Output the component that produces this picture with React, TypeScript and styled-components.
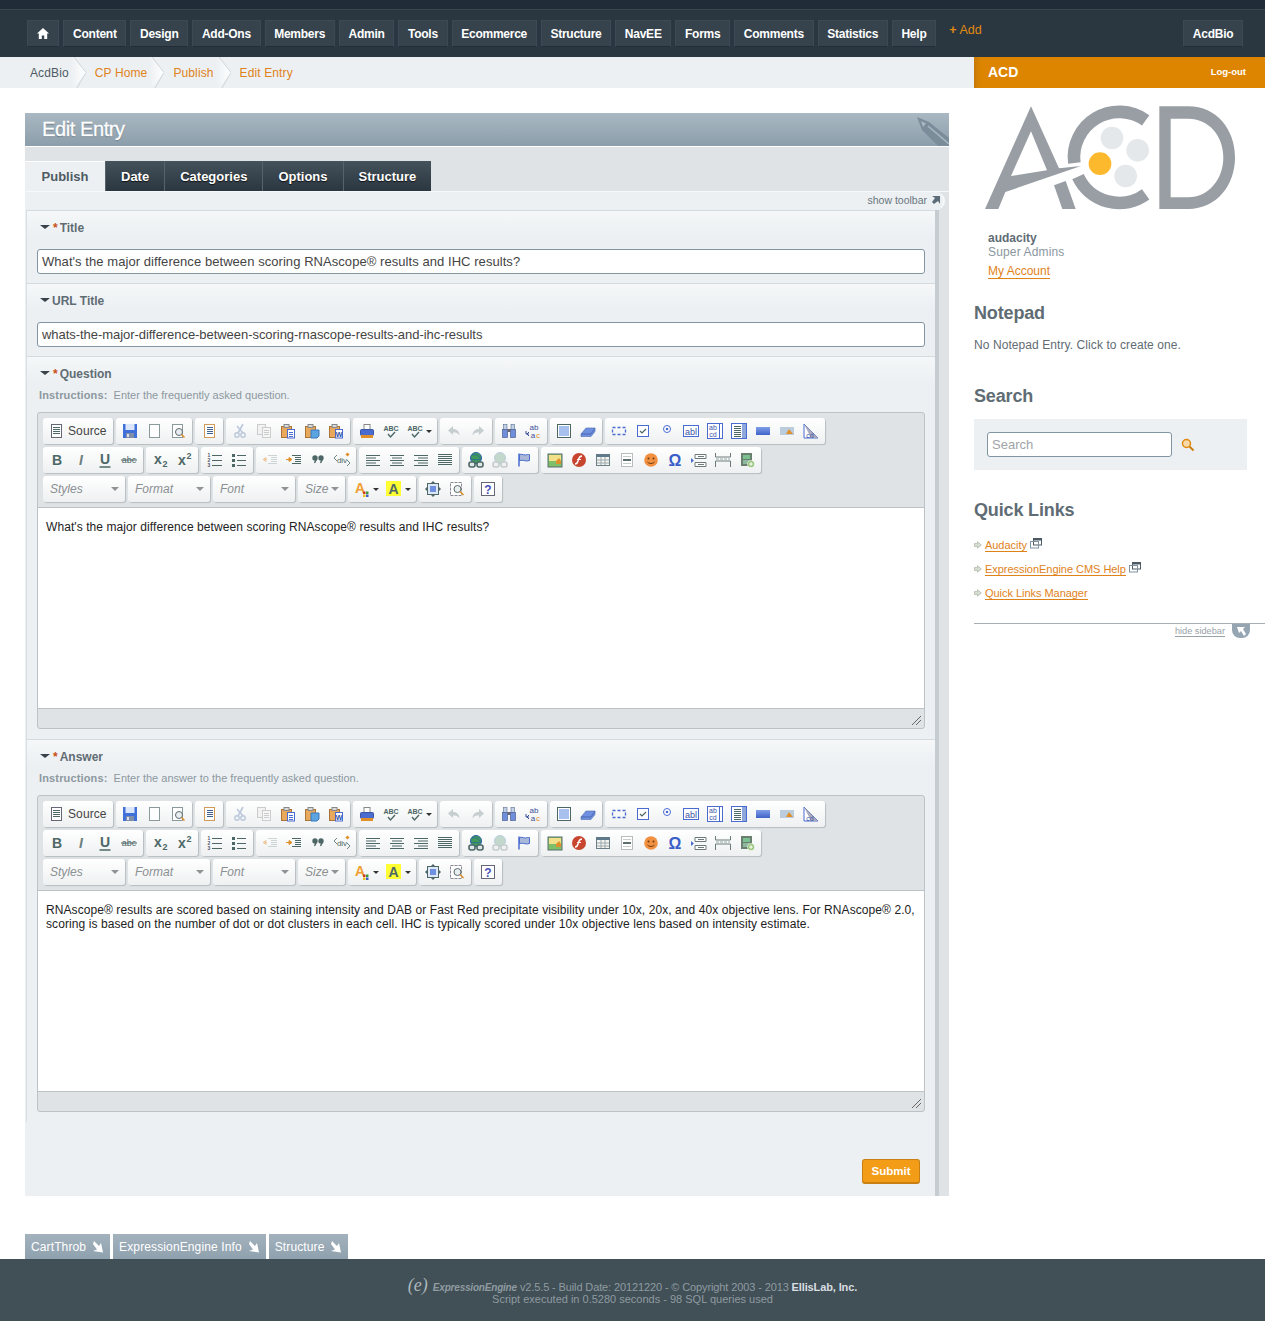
import React from 'react';
import styled, { createGlobalStyle } from 'styled-components';

const GlobalStyle = createGlobalStyle`
  html, body {
    margin: 0;
    padding: 0;
    background: #fff;
    font-family: "Liberation Sans", Arial, sans-serif;
    font-size: 12px;
    color: #5f6c74;
  }
  * { box-sizing: border-box; }
`;

const Header = styled.header`
  height: 57px;
  background: #2a3640;
  border-top: 9px solid #202d38;
  box-shadow: inset 0 1px 0 #384650;
  padding: 0 22px 0 27px;
`;

const NavWrap = styled.div`
  display: flex;
  justify-content: space-between;
  padding-top: 11px;
  height: 48px;
`;

const NavList = styled.nav`
  display: flex;
  gap: 4px;
  align-items: flex-start;
`;

const NavButton = styled.a`
  height: 27px;
  padding: 0 8.7px;
  display: flex;
  align-items: center;
  background: #36434d;
  border: 1px solid #3d4a55;
  border-bottom-color: #222e37;
  color: #fff;
  font-size: 12px;
  font-weight: bold;
  letter-spacing: -0.25px;
  white-space: nowrap;
`;

const HomeIcon = styled.svg`
  display: block;
  margin: 0 0.5px;
`;

const AddLink = styled.a`
  color: #e08a12;
  font-size: 12.5px;
  margin: 3px 0 0 9px;
  line-height: 14px;
  white-space: nowrap;
`;

const AddPlus = styled.b`
  margin-right: 3px;
`;

const SubRow = styled.div`
  display: flex;
  height: 31px;
`;

const Breadcrumbs = styled.div`
  flex: 1;
  background: #ecf0f3;
  display: flex;
  align-items: center;
  padding-left: 30px;
`;

const Crumb = styled.a<{ $plain?: boolean }>`
  color: ${p => (p.$plain ? '#4f5b63' : '#e0821a')};
  font-size: 12px;
  letter-spacing: 0.12px;
`;

const ChevronSvg = styled.svg`
  width: 15px;
  height: 31px;
  margin: 0 9px 0 2px;
  display: block;
`;

const SideHead = styled.div`
  width: 291px;
  background: linear-gradient(to right, #c77a08 0, #dd8500 7px);
  color: #fff;
  font-weight: bold;
  display: flex;
  align-items: center;
  justify-content: space-between;
  padding: 0 19px 2px 14px;
`;

const SideTitle = styled.span`
  font-size: 14px;
`;

const LogOut = styled.a`
  font-size: 9.5px;
  color: #fff;
`;

const Body = styled.div`
  display: grid;
  grid-template-columns: 974px 291px;
`;

const Main = styled.main`
  padding: 25px 25px 0;
`;

const Heading = styled.div`
  height: 34px;
  background: linear-gradient(#a9b8c2, #8c9eab);
  border-bottom: 1px solid #fff;
  position: relative;
  overflow: hidden;
  padding-left: 17px;
  color: #fff;
  font-size: 20px;
  line-height: 32px;
  letter-spacing: -0.4px;
  -webkit-text-stroke: 0.3px #fff;
  text-shadow: 0 1px 1px rgba(60, 75, 85, 0.6);
`;

const PencilSvg = styled.svg`
  position: absolute;
  right: 0;
  top: 4px;
  width: 33px;
  height: 30px;
`;

const Panel = styled.div`
  background: #dfe3e5;
  padding-top: 14px;
`;

const Tabs = styled.div`
  display: flex;
  height: 31px;
  border-bottom: 1px solid #f6f8f9;
`;

const Tab = styled.a<{ $active?: boolean }>`
  height: 30px;
  display: flex;
  align-items: center;
  justify-content: center;
  font-size: 13px;
  font-weight: bold;
  white-space: nowrap;
  ${p =>
    p.$active
      ? `width: 80px;
         background: #ecf0f3;
         border-top: 1px solid #fff;
         color: #4f5b63;`
      : `padding: 0 15px;
         background: linear-gradient(#44525c, #2a3640);
         border-left: 1px solid #55636d;
         color: #fff;
         text-shadow: 0 1px 1px #111;`}
`;

const ToolbarToggle = styled.div`
  width: 920px;
  height: 18px;
  background: #ecf0f3;
  border-radius: 0 10px 10px 0;
  border-right: 2px solid #f7f9fa;
  display: flex;
  align-items: center;
  justify-content: flex-end;
  padding: 0 3px 2px 0;
  gap: 5px;
  font-size: 10.5px;
  color: #6a767e;
`;

const PinSvg = styled.svg`
  width: 8px;
  height: 8px;
`;

const PublishBody = styled.div`
  width: 914px;
  background: #ecf0f3;
  border-right: 4px solid #c5ccd2;
  padding-left: 1px;
`;

const Field = styled.section`
  background: linear-gradient(#f5f7f8, #ecf0f3 26px);
  border-top: 1px solid #d3dae0;
  border-left: 1px solid #d8dfe6;
  padding: 10px 10px 9px 10px;
`;

const LabelRow = styled.div`
  display: flex;
  align-items: center;
  height: 14px;
  font-weight: bold;
  font-size: 12px;
  color: #5f6c74;
`;

const Caret = styled.span`
  width: 0;
  height: 0;
  margin: -3px 2px 0 3px;
  border-style: solid;
  border-width: 4px 5px 0;
  border-color: #39434a transparent transparent;
`;

const Required = styled.span`
  color: #c9501a;
  margin: 0 2px 0 1px;
`;

const Instructions = styled.p`
  margin: 7px 0 10px 2px;
  font-size: 11px;
  line-height: 14px;
  color: #8c989f;
`;

const InstructionsKey = styled.b`
  margin-right: 6px;
  letter-spacing: 0.15px;
`;

const TextInput = styled.div`
  height: 25px;
  margin-top: 14px;
  padding: 0 4px;
  background: #fff;
  border: 1px solid #8195a3;
  border-radius: 3px;
  font-size: 13px;
  letter-spacing: 0.06px;
  line-height: 23px;
  color: #444;
  white-space: nowrap;
`;

const UrlInput = styled(TextInput)`
  letter-spacing: -0.05px;
`;

const Editor = styled.div`
  border: 1px solid #bcc3c6;
  border-radius: 3px;
  background: #dfe3e5;
  margin-bottom: 1px;
`;

const Toolbar = styled.div`
  display: flex;
  flex-direction: column;
  gap: 3px;
  padding: 5px 5px;
  height: 95px;
  border-bottom: 1px solid #bcc3c6;
`;

const ToolRow = styled.div`
  display: flex;
  gap: 3px;
`;

const ToolGroup = styled.div`
  display: flex;
  height: 26px;
  padding: 0 2px;
  align-items: center;
  background: linear-gradient(#fff, #eef0f1);
  border-radius: 3px;
  box-shadow: 1px 1px 1px rgba(90, 100, 110, 0.3);
`;

const ToolButton = styled.span<{ $wide?: boolean }>`
  width: ${p => (p.$wide ? '32px' : '24px')};
  height: 26px;
  display: flex;
  align-items: center;
  padding-left: 4px;
  gap: 3px;
`;

const ToolCaret = styled.i`
  width: 0;
  height: 0;
  border-style: solid;
  border-width: 3px 3px 0;
  border-color: #333 transparent transparent;
`;

const SourceButton = styled.span`
  width: 66px;
  display: flex;
  align-items: center;
  gap: 3px;
  padding-left: 4px;
  font-size: 12px;
  letter-spacing: 0.1px;
  color: #444;
`;

const Combo = styled.span<{ $w: number }>`
  width: ${p => p.$w}px;
  height: 26px;
  margin: 0 -2px;
  padding: 0 6px 0 7px;
  display: flex;
  align-items: center;
  justify-content: space-between;
  font-size: 12px;
  font-style: italic;
  color: #8a8f92;
`;

const ComboCaret = styled.i`
  width: 0;
  height: 0;
  border-style: solid;
  border-width: 4px 4px 0;
  border-color: #8f9396 transparent transparent;
`;

const EditArea = styled.div`
  height: 201px;
  background: #fff;
  padding: 12px 4px 11px 8px;
  font-size: 12px;
  letter-spacing: 0.08px;
  line-height: 14px;
  color: #222;
  border-bottom: 1px solid #bcc3c6;
`;

const Resize = styled.div`
  height: 19px;
  display: flex;
  justify-content: flex-end;
  align-items: flex-end;
  padding: 0 3px 3px 0;
`;

const SubmitRow = styled.div`
  display: flex;
  justify-content: flex-end;
  padding: 37px 15px 12px 0;
`;

const Submit = styled.button`
  height: 25px;
  width: 58px;
  padding: 0;
  background: #f39c17;
  border: 1px solid #c97f11;
  border-bottom-width: 2px;
  border-radius: 3px;
  color: #fff;
  font: bold 11.5px "Liberation Sans", Arial, sans-serif;
`;

const Sidebar = styled.aside`
  padding-top: 10px;
`;

const LogoSvg = styled.svg`
  width: 270px;
  height: 120px;
  margin-left: 1px;
  display: block;
`;

const UserBlock = styled.div`
  padding: 13px 0 0 14px;
  font-size: 12px;
  line-height: 14px;
`;

const UserName = styled.div`
  font-weight: bold;
`;

const UserGroup = styled.div`
  color: #8a97a0;
  letter-spacing: 0.15px;
`;

const Link = styled.a`
  color: #e0821a;
  border-bottom: 1px solid #e0821a;
`;

const AccountLine = styled.div`
  margin-top: 5px;
`;

const SideTitle2 = styled.h3`
  margin: 0;
  font-size: 18px;
  line-height: 22px;
  font-weight: bold;
  letter-spacing: -0.15px;
  color: #5f6c74;
`;

const SideSection = styled.section<{ $top: number }>`
  margin-top: ${p => p.$top}px;
`;

const NoteText = styled.p`
  margin: 14px 0 0;
  font-size: 12px;
  letter-spacing: 0.08px;
  line-height: 14px;
`;

const SearchBox = styled.div`
  width: 273px;
  height: 51px;
  margin-top: 12px;
  background: #ecf0f3;
  display: flex;
  align-items: center;
  padding-left: 13px;
  gap: 9px;
`;

const SearchInput = styled.div`
  width: 185px;
  height: 25px;
  padding: 0 4px;
  background: #fff;
  border: 1px solid #8195a3;
  border-radius: 3px;
  font-size: 13px;
  line-height: 23px;
  color: #a0a4a8;
`;

const QuickList = styled.ul`
  list-style: none;
  margin: 17px 0 0;
  padding: 0;
  display: flex;
  flex-direction: column;
  gap: 10px;
`;

const QuickItem = styled.li`
  display: flex;
  align-items: center;
  height: 14px;
  font-size: 11px;
  letter-spacing: -0.04px;
`;

const SmallSvg = styled.svg`
  display: block;
  flex: none;
`;

const ArrowWrap = styled.span`
  width: 11px;
  display: flex;
`;

const PopWrap = styled.span`
  margin: -4px 0 0 3px;
  display: flex;
`;

const HideRow = styled.div`
  margin-top: 23px;
  border-top: 1px solid #a8afb4;
  display: flex;
  justify-content: flex-end;
  padding-right: 15px;
  gap: 7px;
`;

const HideLink = styled.a`
  font-size: 9.2px;
  line-height: 10px;
  margin-top: 2px;
  height: 11px;
  color: #98a2a9;
  border-bottom: 1px solid #98a2a9;
`;

const HideTab = styled.span`
  width: 18px;
  height: 14px;
  background: #95a6b2;
  border-radius: 0 0 8px 8px;
  display: flex;
  align-items: center;
  justify-content: center;
`;

const AddonTabs = styled.div`
  display: flex;
  gap: 3px;
  margin: 38px 0 0 25px;
`;

const AddonTab = styled.a`
  height: 25px;
  padding: 0 6px;
  display: flex;
  align-items: center;
  gap: 7px;
  background: linear-gradient(#a3b2bd, #8fa1ae);
  color: #fff;
  font-size: 12px;
  letter-spacing: 0.12px;
  white-space: nowrap;
`;

const Footer = styled.footer`
  height: 62px;
  background: #414f56;
  padding-top: 23px;
  text-align: center;
  color: #8f9ba1;
  font-size: 11px;
  line-height: 11.5px;
`;

const FooterLine = styled.span`
  letter-spacing: -0.12px;
`;

const FooterE = styled.span`
  font: italic 18px/0 "Liberation Serif", serif;
  color: #aeb8bd;
  margin-right: 5px;
`;

const FooterBrand = styled.b`
  font-style: italic;
  font-size: 10px;
  letter-spacing: -0.2px;
  margin-right: 3px;
`;

const FooterMaker = styled.b`
  color: #d8dee1;
`;

const BLUE = '#4a6bd0';
const TEAL = '#4d6767';
const OFF = '#bcc8dc';
const ORANGE = '#e0902a';

const Lines = ({ x, y, w, n, gap = 2, c = TEAL }: { x: number; y: number; w: number; n: number; gap?: number; c?: string }) => (
  <path d={Array.from({ length: n }, (_, i) => `M${x} ${y + i * gap + 0.5}h${w}`).join('')} stroke={c} fill="none" />
);

const Letter = ({ t, x = 8, y = 13, size = 14, c = TEAL, italic, weight = 'bold' }: { t: string; x?: number; y?: number; size?: number; c?: string; italic?: boolean; weight?: string }) => (
  <text x={x} y={y} textAnchor="middle" fontFamily="Liberation Sans" fontSize={size} fontWeight={weight} fontStyle={italic ? 'italic' : 'normal'} fill={c}>{t}</text>
);

const Board = () => (
  <>
    <rect x="1.5" y="3.5" width="10" height="11" fill="#e9a95c" stroke="#a9743a" />
    <rect x="4" y="1.5" width="5" height="3" fill="#d8d8d8" stroke="#888" />
  </>
);

const glyphs: Record<string, React.ReactNode> = {
  source: (<><rect x="2.5" y="1.5" width="10" height="13" fill="#fff" stroke="#667" /><Lines x={4} y={4} w={7} n={4} /></>),
  save: (<><rect x="1" y="1" width="14" height="14" fill="#3f6fd8" /><rect x="3.5" y="1" width="9" height="6" fill="#dbe6fb" /><rect x="4" y="10" width="8" height="5" fill="#7f8fa8" /><rect x="5" y="11" width="2" height="3" fill="#dde" /></>),
  newpage: (<rect x="3.5" y="1.5" width="10" height="13" fill="#fff" stroke="#8a9a9a" />),
  preview: (<><rect x="2.5" y="1.5" width="10" height="13" fill="#fff" stroke="#8a9a9a" /><circle cx="9" cy="9" r="3.5" fill="#e8eef2" stroke="#5d6b6b" /><path d="M11.5 11.5l3 3" stroke={ORANGE} strokeWidth="1.6" /></>),
  templates: (<><rect x="3.5" y="1.5" width="10" height="13" fill="#fff" stroke="#d49a58" /><Lines x={6} y={4} w={6} n={4} c="#3f5f8f" /></>),
  cut: (<><path d="M11 1L6 10M5 3l6 7" stroke={OFF} strokeWidth="1.6" /><circle cx="5" cy="12" r="2.2" fill="none" stroke={OFF} strokeWidth="1.4" /><circle cx="11" cy="12" r="2.2" fill="none" stroke={OFF} strokeWidth="1.4" /></>),
  copy: (<><rect x="1.5" y="1.5" width="8" height="10" fill="#f2f2f2" stroke="#ccc" /><rect x="6.5" y="4.5" width="8" height="10" fill="#f6f6f6" stroke="#ccc" /><Lines x={8} y={7} w={5} n={3} c="#ccc" /></>),
  paste: (<><Board /><rect x="7.5" y="6.5" width="7" height="8.5" fill="#fff" stroke={BLUE} /><Lines x={9} y={9} w={4} n={3} c={BLUE} /></>),
  pastetext: (<><Board /><path d="M7 7h8v6l-2 2H7z" fill="#5ba4e0" stroke="#3a78c0" /></>),
  pasteword: (<><Board /><rect x="7.5" y="6.5" width="7" height="8.5" fill="#fff" stroke={BLUE} /><Letter t="W" x={11} y={14} size={7} c="#2a4fa8" /></>),
  print: (<><rect x="5" y="1.5" width="6" height="5" fill="#fff" stroke="#888" /><rect x="1.5" y="6.5" width="13" height="6" rx="1" fill={BLUE} stroke="#3a55a8" /><rect x="2" y="12" width="12" height="3" fill={ORANGE} /></>),
  spell: (<><Letter t="ABC" y={8} size={7} /><path d="M5 11l2.5 3L12 9" stroke={TEAL} strokeWidth="1.4" fill="none" /></>),
  undo: (<path d="M7 3L2 7.5 7 12V9.5c3 0 5 .5 6.5 3 0-4-2.5-6.500-6.500-6.500z" fill="#c6ced0" />),
  redo: (<path d="M9 3l5 4.500L9 12V9.500c-3 0-5 .5-6.500 3 0-4 2.500-6.500 6.500-6.500z" fill="#c6ced0" />),
  find: (<><rect x="2.500" y="1.500" width="3.500" height="5" fill="#c3d0ea" stroke="#6a7f99" strokeWidth=".7" /><rect x="10" y="1.500" width="3.500" height="5" fill="#c3d0ea" stroke="#6a7f99" strokeWidth=".7" /><rect x="1.500" y="6.500" width="5" height="8" fill="#6f8fdc" stroke="#4a6090" strokeWidth=".7" /><rect x="9.500" y="6.500" width="5" height="8" fill="#6f8fdc" stroke="#4a6090" strokeWidth=".7" /><rect x="6.500" y="6" width="3" height="3" fill="#667" /></>),
  replace: (<><Letter t="ab" x={9} y={7} size={8} weight="normal" c="#3a4f9a" /><path d="M1 8v3h3M4 9l-2 2 2 2" stroke="#3a4f9a" fill="none" /><Letter t="a" x={8} y={15} size={8} weight="normal" c="#3a4f9a" /><Letter t="c" x={13} y={15} size={8} weight="normal" c={ORANGE} /></>),
  selectall: (<><rect x="1.500" y="1.500" width="13" height="13" fill="#fff" stroke={TEAL} /><rect x="3" y="3" width="10" height="10" fill="#a8c0ee" /></>),
  eraser: (<path d="M1 11l5-6h9l-4 6z M1 11v2.500h10l4-5V5l-4 6z" fill="#6f90e0" stroke="#4a6bb0" strokeWidth=".6" />),
  form: (<rect x="1.500" y="4.500" width="13" height="7" fill="none" stroke={BLUE} strokeWidth="1.300" strokeDasharray="3 2" />),
  checkbox: (<><rect x="2.500" y="2.500" width="11" height="11" fill="#fff" stroke={BLUE} /><path d="M5 8l2 2 4-4" stroke={TEAL} strokeWidth="1.200" fill="none" /></>),
  radio: (<><circle cx="8" cy="6" r="3.500" fill="#fff" stroke={BLUE} /><circle cx="8" cy="6" r="1.300" fill={BLUE} /></>),
  textfield: (<><rect x="0.500" y="2.500" width="15" height="11" fill="#fff" stroke={BLUE} /><Letter t="abl" x={8} y={12} size={9} c="#3a55a8" weight="normal" /></>),
  textarea: (<><rect x="0.500" y="0.500" width="15" height="15" fill="#fff" stroke={BLUE} /><Letter t="ab" x={6} y={7} size={7} c="#3a55a8" weight="normal" /><Letter t="cd" x={6} y={14} size={7} c="#3a55a8" weight="normal" /><path d="M12.500 1v14" stroke={BLUE} /></>),
  select: (<><rect x="0.500" y="0.500" width="15" height="15" fill="#fff" stroke={BLUE} /><Lines x={3} y={3} w={7} n={6} c={TEAL} /><rect x="11" y="1" width="4" height="14" fill="#8fa8dc" /></>),
  button: (<rect x="1" y="4" width="14" height="8" fill="url(#tb-blue)" />),
  imagebutton: (<><rect x="1" y="4" width="14" height="8" fill="#bcd" /><path d="M7 11l3-5 4 5z" fill={ORANGE} /></>),
  hidden: (<><path d="M1 1l14 14H1z" fill="#fff" stroke={BLUE} /><path d="M1 1l14 14H8z" fill="#aab" /><Letter t="cd" x={7} y={15} size={7} c="#3a55a8" weight="normal" /></>),
  bold: <Letter t="B" size={14} />,
  italic: <Letter t="I" size={14} italic c="#6d8080" />,
  underline: (<><Letter t="U" size={14} y={12} /><path d="M2.500 15h11" stroke={TEAL} strokeWidth="1.500" /></>),
  strike: (<><Letter t="abc" size={9} y={11} weight="normal" /><path d="M0 8h16" stroke={TEAL} /></>),
  sub: (<><Letter t="x" size={14} x={6} y={12} /><Letter t="2" size={9} x={13} y={15} /></>),
  sup: (<><Letter t="x" size={14} x={6} y={13} /><Letter t="2" size={9} x={13} y={7} /></>),
  numbered: (<><Letter t="1" size={5} x={2} y={5} c="#556" /><Letter t="2" size={5} x={2} y={10} c="#556" /><Letter t="3" size={5} x={2} y={15} c="#556" /><path d="M5 3.500h10M5 8.500h10M5 13.500h10" stroke={TEAL} /></>),
  bulleted: (<><rect x="1" y="2" width="3" height="3" fill={TEAL} /><rect x="1" y="7" width="3" height="3" fill={TEAL} /><rect x="1" y="12" width="3" height="3" fill={TEAL} /><path d="M6 3.500h9M6 8.500h9M6 13.500h9" stroke={TEAL} /></>),
  outdent: (<><path d="M6 3.500h9M9 5.500h6M9 7.500h6M9 9.500h6M6 11.500h9" stroke="#ccd4d4" /><path d="M1 7.500h4M1 7.500l3-2v4z" stroke="#f0c9a0" fill="#f0c9a0" /></>),
  indent: (<><path d="M6 3.500h9M9 5.500h6M9 7.500h6M9 9.500h6M6 11.500h9" stroke={TEAL} /><path d="M0 7.500h4M6 7.500l-3-2v4z" stroke={ORANGE} fill={ORANGE} /></>),
  quote: (<><circle cx="5" cy="6" r="2.700" fill={TEAL} /><circle cx="11" cy="6" r="2.700" fill={TEAL} /><path d="M6.500 7l-2 4M12.500 7l-2 4" stroke={TEAL} strokeWidth="1.500" /></>),
  div: (<><Letter t="div" size={8} y={11} x={8} weight="normal" /><path d="M3 3L0 6l3 3M13 8l3 3-3 3" stroke={TEAL} fill="none" strokeWidth=".8" /><rect x="12" y="1" width="3" height="3" fill={ORANGE} transform="rotate(45 13.500 2.500)" /></>),
  left: <path d="M1 3.500h14M1 6h10M1 8.500h14M1 11h10M1 13.500h14" stroke={TEAL} />,
  center: <path d="M1 3.500h14M3 6h10M1 8.500h14M3 11h10M1 13.500h14" stroke={TEAL} />,
  right: <path d="M1 3.500h14M5 6h10M1 8.500h14M5 11h10M1 13.500h14" stroke={TEAL} />,
  justify: <Lines x={1} y={2} w={14} n={6} gap={2} />,
  link: (<><circle cx="8" cy="6" r="5.500" fill="#3f9a5a" stroke="#2a5fa8" /><path d="M4 3c3-1 6 0 8 3M3 7c3 1 7 1 10 0" stroke="#2a5fa8" fill="none" strokeWidth=".8" /><rect x="1" y="10" width="6" height="5" rx="2" fill="#dfe6e6" stroke={TEAL} strokeWidth="1.600" /><rect x="9" y="10" width="6" height="5" rx="2" fill="#dfe6e6" stroke={TEAL} strokeWidth="1.600" /></>),
  unlink: (<><circle cx="8" cy="6" r="5.500" fill="#c3d8cc" stroke="#bcd" /><rect x="1" y="10" width="6" height="5" rx="2" fill="#f0f0f0" stroke="#c3cccc" strokeWidth="1.600" /><rect x="9" y="10" width="6" height="5" rx="2" fill="#f0f0f0" stroke="#c3cccc" strokeWidth="1.600" /></>),
  anchor: (<><path d="M3 1.500v13" stroke={BLUE} strokeWidth="1.500" /><path d="M3.500 2.500c3-1 5 1.500 8 0 2 0 2 0 2 0v6c-3 1.500-6-1-10 0z" fill="#a9b8d8" stroke={BLUE} /></>),
  image: (<><rect x="1" y="2" width="14" height="13" fill="#7fbf6a" stroke="#5a6f6f" /><rect x="2" y="3" width="12" height="6" fill="#f2e08a" /><path d="M9 9l3-3 2 3v3H9z" fill={ORANGE} /></>),
  flash: (<><circle cx="8" cy="8" r="7" fill="#c8452f" /><path d="M11 4c-3 0-3 2-4 5-.5 2-1 3-3 3" stroke="#fff" strokeWidth="1.400" fill="none" /><path d="M6 7.500h4" stroke="#fff" /></>),
  table: (<><rect x="1.500" y="2.500" width="13" height="11" fill="#f4f4f0" stroke="#6a7f88" /><rect x="1" y="2" width="14" height="3" fill="#5f7a88" /><path d="M6 5v8M10 5v8M2 8h12M2 11h12" stroke="#9aa8ac" /></>),
  hr: (<><rect x="2.500" y="1.500" width="11" height="13" fill="#fff" stroke="#b8bcbc" /><path d="M4 4.500h8M4 11.500h8" stroke="#c8cccc" /><rect x="4" y="7" width="8" height="2" fill="#5f6f6f" /></>),
  smiley: (<><circle cx="8" cy="8" r="6.800" fill="#f09040" /><circle cx="5.500" cy="6.500" r="1" fill="#6b3a10" /><circle cx="10.500" cy="6.500" r="1" fill="#6b3a10" /><path d="M4.500 10c2 2 5 2 7 0" stroke="#6b3a10" fill="none" /></>),
  omega: <Letter t="Ω" size={16} y={14} c="#3a5fc8" />,
  pagebreak: (<><path d="M4 2.500h11v4H4zM4 10.500h11v4H4z" fill="#fff" stroke="#6d7a7a" /><path d="M0 6l3 2.500L0 11z" fill={BLUE} /><path d="M7 4.500h6M7 12.500h6" stroke="#6d7a7a" /></>),
  iframe: (<><path d="M.5 1v4h15V1M.5 15v-6h15v6" fill="none" stroke="#6d7a7a" /><path d="M1 7h14" stroke="#9aa" strokeDasharray="3 1" /></>),
  video: (<><rect x="2" y="1" width="11" height="13" fill="#6a7f70" /><rect x="4" y="3" width="7" height="4" fill="#7ac090" /><rect x="4" y="8" width="7" height="4" fill="#8fb8a0" /><circle cx="12" cy="12" r="3.500" fill="#8fc070" stroke="#fff" strokeWidth=".6" /><path d="M10 12h4M12 10v4" stroke="#fff" /></>),
  textcolor: (<><Letter t="A" size={14} x={6} y={12} c="#f0a030" /><rect x="9" y="10.500" width="2.500" height="2.500" fill="#d03a2a" /><rect x="12" y="10.500" width="2.500" height="2.500" fill="#3a9a3a" /><rect x="9" y="13.500" width="2.500" height="2.500" fill="#f0c020" /><rect x="12" y="13.500" width="2.500" height="2.500" fill="#3a5fc8" /></>),
  bgcolor: (<><rect x="0" y="0" width="15" height="15" fill="#ffff33" /><Letter t="A" size={14} x={7.500} y={13} /></>),
  maximize: (<><path d="M8 0l2 2H6zM8 16l-2-2h4zM0 8l2-2v4zM16 8l-2 2V6z" fill={TEAL} /><rect x="2.500" y="2.500" width="11" height="11" fill="#dfe8f6" stroke={TEAL} /><rect x="5" y="5" width="6" height="6" fill="#6f90e0" /></>),
  blocks: (<><rect x="1.500" y="1.500" width="11" height="13" fill="#fff" stroke="#889" strokeDasharray="3 1" /><circle cx="8.500" cy="8" r="3.500" fill="#e8eef2" stroke="#5d6b6b" /><path d="M11 10.500l3.500 3.500" stroke={ORANGE} strokeWidth="1.600" /></>),
  about: (<><rect x="1.500" y="1.500" width="13" height="13" fill="#fff" stroke="#667" /><Letter t="?" size={12} y={12.500} c="#4a4fb8" /></>),
};

const Icon = ({ name }: { name: string }) => (
  <SmallSvg width="16" height="16" viewBox="0 0 16 16">{glyphs[name]}</SmallSvg>
);

const Tool = ({ name, caret }: { name: string; caret?: boolean }) => (
  <ToolButton $wide={caret}>
    <Icon name={name} />
    {caret && <ToolCaret />}
  </ToolButton>
);

const row1 = [
  ['save', 'newpage', 'preview'],
  ['templates'],
  ['cut', 'copy', 'paste', 'pastetext', 'pasteword'],
  ['print', 'spell', 'spell+'],
  ['undo', 'redo'],
  ['find', 'replace'],
  ['selectall', 'eraser'],
  ['form', 'checkbox', 'radio', 'textfield', 'textarea', 'select', 'button', 'imagebutton', 'hidden'],
];

const row2 = [
  ['bold', 'italic', 'underline', 'strike'],
  ['sub', 'sup'],
  ['numbered', 'bulleted'],
  ['outdent', 'indent', 'quote', 'div'],
  ['left', 'center', 'right', 'justify'],
  ['link', 'unlink', 'anchor'],
  ['image', 'flash', 'table', 'hr', 'smiley', 'omega', 'pagebreak', 'iframe', 'video'],
];

const combos: [string, number][] = [['Styles', 82], ['Format', 82], ['Font', 82], ['Size', 47]];

const renderTool = (n: string) =>
  n.endsWith('+') ? <Tool key={n} name={n.slice(0, -1)} caret /> : <Tool key={n} name={n} />;

const RichEditor = ({ children }: { children: React.ReactNode }) => (
  <Editor>
    <Toolbar>
      <ToolRow>
        <ToolGroup>
          <SourceButton>
            <Icon name="source" />
            Source
          </SourceButton>
        </ToolGroup>
        {row1.map((g, i) => (
          <ToolGroup key={i}>{g.map(renderTool)}</ToolGroup>
        ))}
      </ToolRow>
      <ToolRow>
        {row2.map((g, i) => (
          <ToolGroup key={i}>{g.map(renderTool)}</ToolGroup>
        ))}
      </ToolRow>
      <ToolRow>
        {combos.map(([label, w]) => (
          <ToolGroup key={label}>
            <Combo $w={w}>
              {label}
              <ComboCaret />
            </Combo>
          </ToolGroup>
        ))}
        <ToolGroup>
          <Tool name="textcolor" caret />
          <Tool name="bgcolor" caret />
        </ToolGroup>
        <ToolGroup>
          <Tool name="maximize" />
          <Tool name="blocks" />
        </ToolGroup>
        <ToolGroup>
          <Tool name="about" />
        </ToolGroup>
      </ToolRow>
    </Toolbar>
    <EditArea>{children}</EditArea>
    <Resize>
      <SmallSvg width="9" height="9" viewBox="0 0 9 9">
        <path d="M0 9L9 0M4 9l5-5" stroke="#666" fill="none" />
      </SmallSvg>
    </Resize>
  </Editor>
);

const FieldLabel = ({ text, required }: { text: string; required?: boolean }) => (
  <LabelRow>
    <Caret />
    {required && <Required>*</Required>}
    {text}
  </LabelRow>
);

const Chevron = ({ id }: { id: string }) => (
  <ChevronSvg viewBox="0 0 15 31">
    <defs>
      <linearGradient id={id}>
        <stop offset="0" stopColor="#ecf0f3" />
        <stop offset="1" stopColor="#fff" />
      </linearGradient>
    </defs>
    <path d="M0 0h3l12 15.500L3 31H0z" fill={`url(#${id})`} />
    <path d="M3 0l12 15.500L6 31" stroke="#cfd5d9" fill="none" />
  </ChevronSvg>
);

const AddonArrow = () => (
  <SmallSvg width="11" height="12" viewBox="0 0 11 12">
    <path d="M1 0l5 5 2-3 2 9.500L0 10l4-1.500L0 3z" fill="#fff" />
  </SmallSvg>
);

const QuickArrow = () => (
  <SmallSvg width="8" height="8" viewBox="0 0 8 8">
    <path d="M.5 2.500h3V.7L7.300 4 3.500 7.300V5.500h-3z" fill="#d5ddd2" stroke="#a9b5a5" strokeWidth=".7" />
  </SmallSvg>
);

const PopIcon = () => (
  <SmallSvg width="12" height="11" viewBox="0 0 12 11">
    <rect x="3.500" y=".5" width="8" height="6.500" fill="#fff" stroke="#4d5a66" />
    <rect x="3.500" y=".5" width="8" height="2" fill="#4d5a66" />
    <rect x=".5" y="3.500" width="8" height="6.500" fill="none" stroke="#7f93a3" />
  </SmallSvg>
);

const Logo = () => (
  <LogoSvg viewBox="0 0 810 360">
    <path
      fillRule="evenodd"
      fill="#989ea3"
      d="M168 25L30 333H70L91 282L318 204L252 211ZM168 100L108 234L216 217Z"
    />
    <path fill="#989ea3" d="M237 262L272 249L302 333H262Z" />
    <path
      fill="none"
      stroke="#989ea3"
      strokeWidth="38"
      d="M512 67A136 136 0 0 0 298 195M309 236A136 136 0 0 0 512 289"
    />
    <path
      fillRule="evenodd"
      fill="#989ea3"
      d="M553 25H640C725 25 780 95 780 178C780 262 725 333 640 333H553ZM587 62V298H640C700 298 745 245 745 178C745 112 700 62 640 62Z"
    />
    <circle cx="411" cy="120" r="34" fill="#e5e8ea" />
    <circle cx="488" cy="157" r="34" fill="#e5e8ea" />
    <circle cx="452" cy="234" r="34" fill="#e5e8ea" />
    <circle cx="375" cy="197" r="34" fill="#fdb92d" />
  </LogoSvg>
);

const navItems = ['Content', 'Design', 'Add-Ons', 'Members', 'Admin', 'Tools', 'Ecommerce', 'Structure', 'NavEE', 'Forms', 'Comments', 'Statistics', 'Help'];

export default function App() {
  return (
    <>
      <GlobalStyle />
      <svg width="0" height="0" style={{ position: 'absolute' }}>
        <defs>
          <linearGradient id="tb-blue" x2="0" y2="1">
            <stop offset="0" stopColor="#7f9fe8" />
            <stop offset="1" stopColor="#3f62c8" />
          </linearGradient>
        </defs>
      </svg>
      <Header>
        <NavWrap>
          <NavList>
            <NavButton>
              <HomeIcon width="12" height="11" viewBox="0 0 12 11">
                <path d="M6 0L0 5.500h1.800V11h3V7.500h2.400V11h3V5.500H12z" fill="#fff" />
              </HomeIcon>
            </NavButton>
            {navItems.map(n => (
              <NavButton key={n}>{n}</NavButton>
            ))}
            <AddLink><AddPlus>+</AddPlus>Add</AddLink>
          </NavList>
          <NavButton>AcdBio</NavButton>
        </NavWrap>
      </Header>
      <SubRow>
        <Breadcrumbs>
          <Crumb $plain>AcdBio</Crumb>
          <Chevron id="cr1" />
          <Crumb>CP Home</Crumb>
          <Chevron id="cr2" />
          <Crumb>Publish</Crumb>
          <Chevron id="cr3" />
          <Crumb>Edit Entry</Crumb>
        </Breadcrumbs>
        <SideHead>
          <SideTitle>ACD</SideTitle>
          <LogOut>Log-out</LogOut>
        </SideHead>
      </SubRow>
      <Body>
        <Main>
          <Heading>
            Edit Entry
            <PencilSvg viewBox="0 0 33 30">
              <path d="M1 0L13 5L33 21V30H23L6 13Z" fill="#7b8d9a" />
              <path d="M5 4L10 6.500L7 10Z" fill="#a9b8c2" />
              <path d="M12 9L33 27" fill="none" stroke="#a9b8c2" strokeWidth="1.600" />
            </PencilSvg>
          </Heading>
          <Panel>
            <Tabs>
              <Tab $active>Publish</Tab>
              <Tab>Date</Tab>
              <Tab>Categories</Tab>
              <Tab>Options</Tab>
              <Tab>Structure</Tab>
            </Tabs>
            <ToolbarToggle>
              show toolbar
              <PinSvg viewBox="0 0 8 8">
                <path d="M0 0h8v8L6 5 2 8 0 6l3-4z" fill="#5c6c78" />
              </PinSvg>
            </ToolbarToggle>
            <PublishBody>
              <Field>
                <FieldLabel text="Title" required />
                <TextInput>What's the major difference between scoring RNAscope® results and IHC results?</TextInput>
              </Field>
              <Field>
                <FieldLabel text="URL Title" />
                <UrlInput>whats-the-major-difference-between-scoring-rnascope-results-and-ihc-results</UrlInput>
              </Field>
              <Field>
                <FieldLabel text="Question" required />
                <Instructions>
                  <InstructionsKey>Instructions:</InstructionsKey>
                  Enter the frequently asked question.
                </Instructions>
                <RichEditor>What's the major difference between scoring RNAscope® results and IHC results?</RichEditor>
              </Field>
              <Field>
                <FieldLabel text="Answer" required />
                <Instructions>
                  <InstructionsKey>Instructions:</InstructionsKey>
                  Enter the answer to the frequently asked question.
                </Instructions>
                <RichEditor>
                  RNAscope® results are scored based on staining intensity and DAB or Fast Red precipitate visibility under 10x, 20x, and 40x objective lens. For RNAscope® 2.0, scoring is based on the number of dot or dot clusters in each cell. IHC is typically scored under 10x objective lens based on intensity estimate.
                </RichEditor>
              </Field>
              <SubmitRow>
                <Submit>Submit</Submit>
              </SubmitRow>
            </PublishBody>
          </Panel>
        </Main>
        <Sidebar>
          <Logo />
          <UserBlock>
            <UserName>audacity</UserName>
            <UserGroup>Super Admins</UserGroup>
            <AccountLine>
              <Link>My Account</Link>
            </AccountLine>
          </UserBlock>
          <SideSection $top={24}>
            <SideTitle2>Notepad</SideTitle2>
            <NoteText>No Notepad Entry. Click to create one.</NoteText>
          </SideSection>
          <SideSection $top={33}>
            <SideTitle2>Search</SideTitle2>
            <SearchBox>
              <SearchInput>Search</SearchInput>
              <SmallSvg width="14" height="14" viewBox="0 0 14 14">
                <circle cx="5.500" cy="5.500" r="4" fill="#f8d9a8" stroke="#e08a12" strokeWidth="1.500" />
                <path d="M8.500 8.500l4 4" stroke="#c97f11" strokeWidth="2" />
              </SmallSvg>
            </SearchBox>
          </SideSection>
          <SideSection $top={29}>
            <SideTitle2>Quick Links</SideTitle2>
            <QuickList>
              <QuickItem>
                <ArrowWrap><QuickArrow /></ArrowWrap>
                <Link>Audacity</Link>
                <PopWrap><PopIcon /></PopWrap>
              </QuickItem>
              <QuickItem>
                <ArrowWrap><QuickArrow /></ArrowWrap>
                <Link>ExpressionEngine CMS Help</Link>
                <PopWrap><PopIcon /></PopWrap>
              </QuickItem>
              <QuickItem>
                <ArrowWrap><QuickArrow /></ArrowWrap>
                <Link>Quick Links Manager</Link>
              </QuickItem>
            </QuickList>
          </SideSection>
          <HideRow>
            <HideLink>hide sidebar</HideLink>
            <HideTab>
              <SmallSvg width="9" height="9" viewBox="0 0 9 9">
                <path d="M0 0h8L6 2l3 5-2 2-3-5-2 2z" fill="#fff" />
              </SmallSvg>
            </HideTab>
          </HideRow>
        </Sidebar>
      </Body>
      <AddonTabs>
        <AddonTab>CartThrob <AddonArrow /></AddonTab>
        <AddonTab>ExpressionEngine Info <AddonArrow /></AddonTab>
        <AddonTab>Structure <AddonArrow /></AddonTab>
      </AddonTabs>
      <Footer>
        <FooterE>(e)</FooterE>
        <FooterBrand>ExpressionEngine</FooterBrand>
        <FooterLine>v2.5.5 - Build Date: 20121220 - © Copyright 2003 - 2013 <FooterMaker>EllisLab, Inc.</FooterMaker></FooterLine>
        <br />
        Script executed in 0.5280 seconds - 98 SQL queries used
      </Footer>
    </>
  );
}
